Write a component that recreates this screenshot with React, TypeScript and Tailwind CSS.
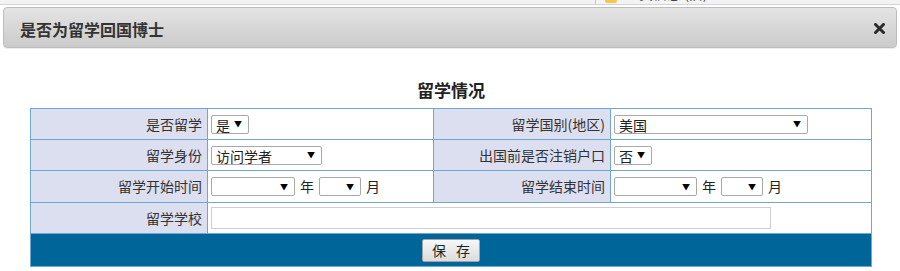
import React from "react";

const font = { fontFamily: '"Noto Sans CJK SC", "Noto Sans", sans-serif' };

function Sel({ w, text }: { w: number; text?: string }) {
  return (
    <div
      className="inline-flex items-center justify-between h-[19px] border border-[#a9a9a9] rounded-[2px] bg-white pl-[4px] pr-[6px] text-[14px] leading-none text-[#222]"
      style={{ width: w }}
    >
      <span className="pt-[1px]">{text ?? ""}</span>
      <span className="text-[8px] text-black">▼</span>
    </div>
  );
}

function Label({ children }: { children: React.ReactNode }) {
  return (
    <div className="bg-[#dcdff0] flex items-center justify-end pr-[5px] text-[14px] text-[#333]">
      {children}
    </div>
  );
}

function Cell({ children, className = "" }: { children: React.ReactNode; className?: string }) {
  return <div className={`bg-white flex items-center pl-[3px] ${className}`}>{children}</div>;
}

export default function App() {
  return (
    <div className="w-[900px] h-[271px] bg-white overflow-hidden" style={font}>
      {/* top strip */}
      <div className="h-[5px] bg-[#f3f3f3] border-b border-[#d4d4d4] overflow-hidden flex">
        <div className="ml-[595px] border-l border-[#c8c8c8] h-full flex items-start">
          <div className="ml-[9px] mt-[-3px] w-[12px] h-[6px] rounded-[2px] bg-[#f2c94c]" />
          <div className="ml-[8px] mt-[-14px] text-[14px] text-[#444] leading-none">人员信息 (旧)</div>
        </div>
      </div>
      {/* header bar */}
      <div className="mt-[2px] mx-[3px] h-[41px] rounded-[4px] border border-[#bdbdbd] bg-gradient-to-b from-[#e4e4e4] to-[#cbcbcb] flex items-center justify-between pl-[16px] pr-[11px] shadow-[0_1px_1px_rgba(0,0,0,0.08)]">
        <span className="text-[16px] font-bold text-[#333] pt-[2px]">是否为留学回国博士</span>
        <svg width="11" height="11" viewBox="0 0 11 11" className="mt-[1px]">
          <path d="M1.5 1.5 L9.5 9.5 M9.5 1.5 L1.5 9.5" stroke="#2a2a2a" strokeWidth="3" strokeLinecap="square" />
        </svg>
      </div>
      {/* title */}
      <div className="h-[60px] flex items-end justify-center pb-[7px] pl-[2px]">
        <span className="text-[17px] font-bold text-[#222] leading-[22px]">留学情况</span>
      </div>
      {/* table */}
      <div className="ml-[30px] w-[842px] border border-[#6fa7d0] bg-[#6fa7d0] grid grid-cols-[176px_225px_176px_260px] grid-rows-[30px_30px_31px_30px_32px] gap-px">
        <Label>是否留学</Label>
        <Cell><Sel w={38} text="是" /></Cell>
        <Label>留学国别(地区)</Label>
        <Cell><Sel w={194} text="美国" /></Cell>

        <Label>留学身份</Label>
        <Cell><Sel w={111} text="访问学者" /></Cell>
        <Label>出国前是否注销户口</Label>
        <Cell><Sel w={38} text="否" /></Cell>

        <Label>留学开始时间</Label>
        <Cell className="gap-[5px] text-[14px] text-[#222]">
          <Sel w={84} />
          <span>年</span>
          <Sel w={42} />
          <span>月</span>
        </Cell>
        <Label>留学结束时间</Label>
        <Cell className="gap-[5px] text-[14px] text-[#222]">
          <Sel w={83} />
          <span>年</span>
          <Sel w={42} />
          <span>月</span>
        </Cell>

        <Label>留学学校</Label>
        <div className="col-span-3 bg-white flex items-center pl-[3px]">
          <div className="w-[560px] h-[22px] border border-[#cfcfcf] bg-white" />
        </div>

        <div className="col-span-4 bg-[#006699] flex items-center justify-center">
          <button className="w-[58px] h-[23px] border border-[#a3a3a3] rounded-[2px] bg-gradient-to-b from-[#f7f7f7] to-[#dcdcdc] flex items-center justify-center gap-[10px] text-[14px] text-[#222]">
            <span>保</span>
            <span>存</span>
          </button>
        </div>
      </div>
    </div>
  );
}
